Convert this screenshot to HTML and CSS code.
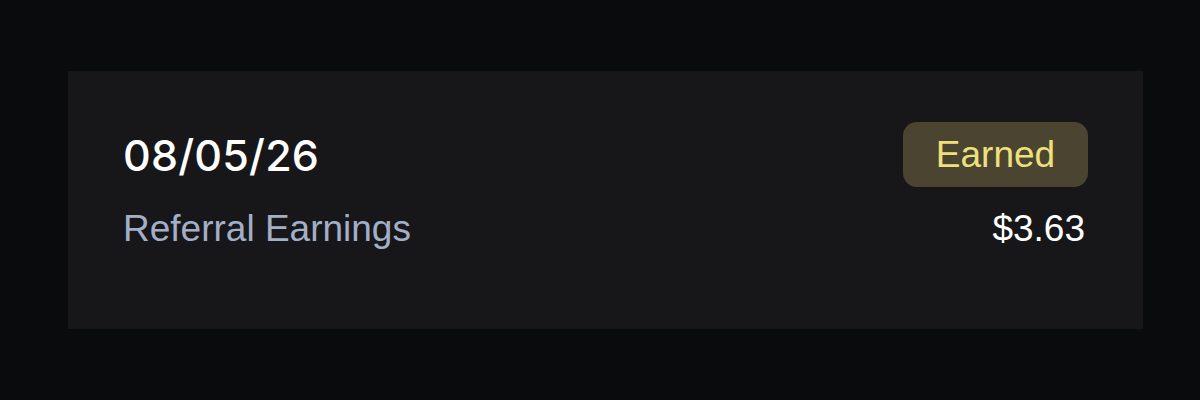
FILE: index.html
```html
<!DOCTYPE html>
<html>
<head>
<meta charset="utf-8">
<link rel="stylesheet" href="styles.css">
</head>
<body>
<div class="card">
  <div class="row top">
    <div class="date">08/05/26</div>
    <div class="badge">Earned</div>
  </div>
  <div class="row bottom">
    <div class="label">Referral Earnings</div>
    <div class="amount">$3.63</div>
  </div>
</div>
</body>
</html>
```
FILE: styles.css
```css
html, body {
  margin: 0;
  padding: 0;
  background: #0a0b0d;
  width: 1200px;
  height: 400px;
  overflow: hidden;
}
body {
  padding: 71px 57px 0 68px;
  box-sizing: border-box;
  font-family: "Liberation Sans", Arial, sans-serif;
}
.card {
  width: 1075px;
  height: 258px;
  background: #17171a;
  box-sizing: border-box;
  padding: 51px 55px 0 55px;
  display: flex;
  flex-direction: column;
}
.row {
  display: flex;
  justify-content: space-between;
  align-items: center;
}
.date {
  font-family: Inter, "Liberation Sans", sans-serif;
  color: #ffffff;
  font-size: 43px;
  font-weight: 500;
  letter-spacing: 0.2px;
}
.badge {
  width: 185px;
  height: 65px;
  border-radius: 14px;
  background: #4a4430;
  color: #eee07e;
  font-size: 37px;
  display: flex;
  align-items: center;
  justify-content: center;
}
.bottom {
  margin-top: 21px;
  align-items: baseline;
  line-height: 42px;
}
.label {
  color: #a3afc7;
  font-size: 37px;
}
.amount {
  color: #ffffff;
  font-size: 37px;
  padding-right: 3px;
}
```
